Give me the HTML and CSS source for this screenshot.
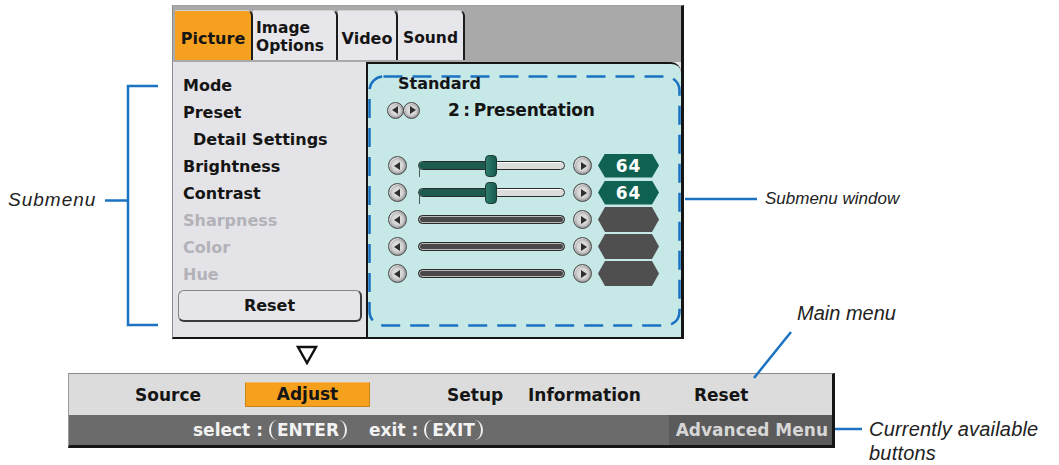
FILE: index.html
```html
<!DOCTYPE html>
<html lang="en">
<head>
<meta charset="utf-8">
<title>Menu</title>
<link rel="stylesheet" href="styles.css">
</head>
<body>
<div class="page">
  <div class="window">
    <div class="tabbar">
      <div class="tab tab-picture">Picture</div>
      <div class="tab tab-image"><span>Image<br>Options</span></div>
      <div class="tab tab-video">Video</div>
      <div class="tab tab-sound">Sound</div>
    </div>
    <div class="winbody">
      <div class="submenu">
        <div class="item">Mode</div>
        <div class="item">Preset</div>
        <div class="item sub">Detail Settings</div>
        <div class="item">Brightness</div>
        <div class="item">Contrast</div>
        <div class="item off">Sharpness</div>
        <div class="item off">Color</div>
        <div class="item off">Hue</div>
        <div class="resetbtn">Reset</div>
      </div>
      <div class="subwin">
        <svg class="dash" width="313" height="252" viewBox="0 0 313 252"><rect x="1.5" y="1.5" width="310" height="249" rx="14" ry="14" fill="none" stroke="#1a72c2" stroke-width="2.5" stroke-dasharray="19 10"/></svg>
        <div class="std">Standard</div>
        <div class="preset"><span class="cb sm left"></span><span class="cb sm right"></span><span class="ptxt">2 : Presentation</span></div>
        <div class="sliders">
          <div class="srow"><span class="cb left"></span><div class="track on"><div class="fill" style="width:67px"></div><div class="knob" style="left:66px"></div></div><span class="cb right"></span><div class="val">64</div></div>
          <div class="srow"><span class="cb left"></span><div class="track on"><div class="fill" style="width:67px"></div><div class="knob" style="left:66px"></div></div><span class="cb right"></span><div class="val">64</div></div>
          <div class="srow"><span class="cb left"></span><div class="track off"></div><span class="cb right"></span><div class="val off"></div></div>
          <div class="srow"><span class="cb left"></span><div class="track off"></div><span class="cb right"></span><div class="val off"></div></div>
          <div class="srow"><span class="cb left"></span><div class="track off"></div><span class="cb right"></span><div class="val off"></div></div>
        </div>
      </div>
    </div>
  </div>
  <svg class="pointer" width="22" height="20" viewBox="0 0 22 20"><polygon points="2,2 20,2 11,18" fill="none" stroke="#111" stroke-width="2.4" stroke-linejoin="miter"/></svg>
  <div class="menubar">
    <div class="mtop">
      <span class="mi mi-source">Source</span>
      <span class="mi mi-adjust">Adjust</span>
      <span class="mi mi-setup">Setup</span>
      <span class="mi mi-info">Information</span>
      <span class="mi mi-reset">Reset</span>
    </div>
    <div class="mbot">
      <span class="hint">select :<span class="key">ENTER</span></span>
      <span class="hint hint-exit">exit :<span class="key">EXIT</span></span>
      <span class="adv">Advanced Menu</span>
    </div>
  </div>

  <svg class="leaders" width="1059" height="465" viewBox="0 0 1059 465">
    <g fill="none" stroke="#1b73c2" stroke-width="2.5">
      <path d="M158 86 H128 V325 H158"/>
      <path d="M105 200.5 H128"/>
      <path d="M685 199 H757"/>
      <path d="M754 378 L791 332"/>
      <path d="M835 429 H862"/>
    </g>
  </svg>
  <div class="note n-submenu">Submenu</div>
  <div class="note n-window">Submenu window</div>
  <div class="note n-main">Main menu</div>
  <div class="note n-buttons">Currently available<br>buttons</div>
</div>
</body>
</html>
```

FILE: styles.css
```css
html, body {
  margin: 0;
  padding: 0;
  background: #ffffff;
}

body {
  font-family: "DejaVu Sans", "Liberation Sans", sans-serif;
  color: #151515;
}

.page {
  position: relative;
  width: 1059px;
  height: 465px;
  overflow: hidden;
  padding-top: 5px;
  box-sizing: border-box;
  background: #ffffff;
}

/* ---------- OSD window ---------- */
.window {
  margin-left: 172px;
  width: 512px;
  height: 334px;
  box-sizing: border-box;
  border-left: 1px solid #8c8c8c;
  border-top: 1px solid #a3a3a3;
  border-right: 3px solid #151515;
  border-bottom: 2px solid #151515;
  display: flex;
  flex-direction: column;
  background: #e4e3e8;
}

.tabbar {
  height: 56px;
  flex: none;
  box-sizing: border-box;
  padding: 4px 0 0 2px;
  background: #a9a9a9;
  display: flex;
  align-items: flex-start;
}

.tab {
  height: 50px;
  box-sizing: border-box;
  background: #e7e6ea;
  border-top: 1px solid #cfcfcf;
  border-right: 2px solid #1c1c1c;
  border-top-right-radius: 6px;
  display: flex;
  align-items: center;
  justify-content: center;
  padding-top: 5px;
  font-weight: bold;
  font-size: 16px;
  color: #151515;
}

.tab-picture { width: 78px; background: #f5a01f; }
.tab-image {
  width: 85px;
  font-size: 15.5px;
  line-height: 18px;
  justify-content: flex-start;
  padding-left: 3px;
  padding-top: 3px;
}
.tab-image span { display: block; }
.tab-video { width: 60px; }
.tab-sound { width: 67px; font-size: 15.5px; }

.winbody {
  flex: 1;
  display: flex;
}

.submenu {
  width: 193px;
  box-sizing: border-box;
  padding: 10px 0 0 10px;
  background: #e4e3e8;
}

.item {
  height: 27px;
  line-height: 27px;
  font-weight: bold;
  font-size: 16px;
  color: #151515;
  white-space: nowrap;
}
.item.sub { padding-left: 10px; }
.item.off { color: #b3b2b8; }

.resetbtn {
  margin: 2px 0 0 -5px;
  width: 184px;
  height: 32px;
  box-sizing: border-box;
  border: 1px solid #858585;
  border-right: 2px solid #3a3a3a;
  border-bottom: 2px solid #3a3a3a;
  border-radius: 6px;
  background: #e6e5ea;
  text-align: center;
  line-height: 29px;
  font-weight: bold;
  font-size: 16px;
}

.subwin {
  position: relative;
  width: 315px;
  box-sizing: border-box;
  border-left: 2px solid #151515;
  border-top: 2px solid #151515;
  border-top-right-radius: 10px;
  background: #c6e8e7;
  padding: 8px 0 0 20px;
}

.dash {
  position: absolute;
  left: 0;
  top: 11px;
}

.std {
  position: relative;
  margin-left: 10px;
  height: 24px;
  line-height: 24px;
  font-weight: bold;
  font-size: 16px;
}

.preset {
  position: relative;
  display: flex;
  align-items: center;
  height: 24px;
  margin-top: 2px;
  margin-left: -1px;
}

.ptxt {
  margin-left: 28px;
  font-weight: bold;
  font-size: 17px;
  letter-spacing: -0.2px;
  word-spacing: -2px;
}

.sliders {
  position: relative;
  margin-top: 30px;
}

.srow {
  height: 27px;
  display: flex;
  align-items: center;
}

/* round arrow buttons */
.cb {
  position: relative;
  flex: none;
  width: 19px;
  height: 19px;
  box-sizing: border-box;
  border-radius: 50%;
  border: 1.5px solid #4a4a4a;
  background: radial-gradient(circle at 50% 50%, #e9e9e9 0, #d2d2d2 45%, #9a9a9a 70%, #6e6e6e 100%);
  box-shadow: inset 1px 1px 0 rgba(255,255,255,0.6);
}
.cb.sm { width: 17px; height: 17px; }
.cb::after {
  content: "";
  position: absolute;
  top: 50%;
  left: 50%;
  border-top: 4.5px solid transparent;
  border-bottom: 4.5px solid transparent;
  transform: translate(-50%, -50%);
}
.cb.left::after { border-right: 6px solid #2e2e2e; margin-left: -1px; }
.cb.right::after { border-left: 6px solid #2e2e2e; margin-left: 1px; }

.preset .cb.right { margin-left: -1px; }

/* tracks */
.track {
  position: relative;
  flex: none;
  width: 147px;
  height: 9px;
  margin-left: 11px;
  box-sizing: border-box;
  border: 1.5px solid #2a2a2a;
  border-radius: 5px;
}
.track.on {
  background: #dcdcdc;
  box-shadow: inset 0 1px 0 #ffffff;
}
.track.on::after {
  content: "";
  position: absolute;
  left: 0;
  top: 100%;
  width: 1px;
  height: 8px;
  background: #4a5a58;
}
.track.off {
  background: #474747;
  box-shadow: inset 0 0 0 1px #b9b9b9;
}
.fill {
  position: absolute;
  left: 0;
  top: 0;
  bottom: 0;
  background: #1d5a4f;
  border-radius: 4px 0 0 4px;
}
.knob {
  position: absolute;
  top: 50%;
  width: 12px;
  height: 22px;
  box-sizing: border-box;
  transform: translateY(-50%);
  background: linear-gradient(to right, #2f7d6d, #165a4d);
  border: 1px solid #1b3b35;
  border-radius: 4px;
}

.srow .cb.right { margin-left: 8px; }

.val {
  flex: none;
  width: 61px;
  height: 24px;
  margin-left: 6px;
  background: #0f6252;
  clip-path: polygon(7px 0, 54px 0, 61px 50%, 54px 100%, 7px 100%, 0 50%);
  color: #ffffff;
  font-weight: bold;
  font-size: 17px;
  line-height: 24px;
  text-align: center;
  letter-spacing: 1px;
}
.val.off { background: #4f4f4f; height: 25px; }

/* ---------- pointer ---------- */
.pointer {
  display: block;
  margin: 6px 0 0 296px;
}

/* ---------- main menu bar ---------- */
.menubar {
  margin: 8px 0 0 68px;
  width: 767px;
  height: 75px;
  box-sizing: border-box;
  border-top: 1px solid #8c8c8c;
  border-left: 1px solid #9a9a9a;
  border-right: 3px solid #151515;
  border-bottom: 3px solid #151515;
  display: flex;
  flex-direction: column;
}

.mtop {
  height: 41px;
  flex: none;
  background: #dcdcdc;
  display: flex;
  align-items: center;
  padding-left: 66px;
  font-weight: bold;
  font-size: 17px;
  color: #151515;
}

.mi { display: block; white-space: nowrap; }
.mi-source { width: 110px; }
.mi-adjust {
  width: 125px;
  height: 25px;
  box-sizing: border-box;
  background: #f6a11d;
  border: 1px solid #c9861c;
  border-top-color: #f0b860;
  text-align: center;
  line-height: 23px;
}
.mi-setup { margin-left: 77px; width: 81px; }
.mi-info { width: 166px; }

.mbot {
  flex: 1;
  background: #6b6b6b;
  display: flex;
  align-items: center;
  padding-left: 124px;
  font-weight: bold;
  font-size: 17px;
  color: #f2f2f2;
}

.hint { white-space: nowrap; }
.hint-exit { margin-left: 22px; }

.key {
  display: inline-block;
  margin-left: 6px;
  padding: 0 6px;
  line-height: 20px;
  border-left: 2px solid #f2f2f2;
  border-right: 2px solid #f2f2f2;
  border-radius: 9px / 11px;
}

.adv {
  margin-left: auto;
  height: 100%;
  display: flex;
  align-items: center;
  padding: 0 4px 0 7px;
  background: #5b5b5b;
  color: #d6d6d6;
}

/* ---------- annotations ---------- */
.leaders {
  position: absolute;
  left: 0;
  top: 0;
  pointer-events: none;
}

.note {
  position: absolute;
  font-family: "Liberation Sans", Arial, sans-serif;
  font-style: italic;
  color: #222;
  white-space: nowrap;
}
.n-submenu { left: 8px; top: 188px; font-size: 19px; line-height: 24px; letter-spacing: 1px; }
.n-window { left: 765px; top: 189px; font-size: 17px; line-height: 20px; }
.n-main { left: 797px; top: 301px; font-size: 20px; line-height: 24px; }
.n-buttons { left: 869px; top: 417px; font-size: 20px; line-height: 24px; letter-spacing: 0.2px; }
```
